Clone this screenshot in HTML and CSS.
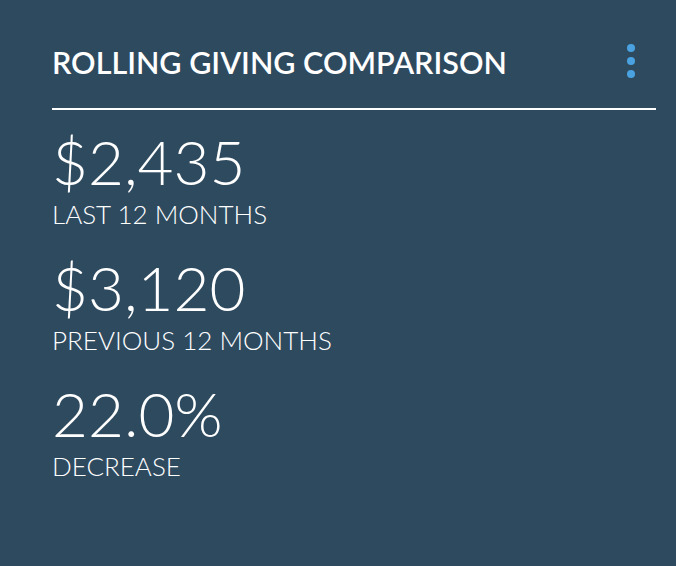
FILE: index.html
```html
<!DOCTYPE html>
<html lang="en">

<head>
    <meta charset="UTF-8">
    <meta name="viewport" content="width=device-width, initial-scale=1.0">
    <title>Rolling Giving Comparison</title>
    <link rel="stylesheet" href="styles.css">
</head>

<body>
    <div class="card">
        <div class="card-header">
            <h2 class="card-title">ROLLING GIVING COMPARISON</h2>
            <button class="menu-button" type="button" aria-label="Menu">
                <span class="dot"></span>
                <span class="dot"></span>
                <span class="dot"></span>
            </button>
        </div>
        <div class="stats">
            <div class="stat">
                <div class="stat-value">$2,435</div>
                <div class="stat-label">LAST 12 MONTHS</div>
            </div>
            <div class="stat">
                <div class="stat-value">$3,120</div>
                <div class="stat-label">PREVIOUS 12 MONTHS</div>
            </div>
            <div class="stat">
                <div class="stat-value">22.0%</div>
                <div class="stat-label">DECREASE</div>
            </div>
        </div>
    </div>
</body>

</html>
```

FILE: styles.css
```css
body {
    margin: 0;
    padding: 0;
    background-color: #2e4a5f;
    font-family: Lato, "Open Sans", sans-serif;
    color: white;
}

.card {
    width: 604px;
    padding: 38px 20px 0 52px;
}

.card-header {
    display: flex;
    align-items: flex-start;
    justify-content: space-between;
    border-bottom: 2px solid white;
    padding-bottom: 22px;
}

.card-title {
    margin: 0;
    font-size: 30.5px;
    font-weight: 600;
    line-height: 48px;
}

.menu-button {
    display: flex;
    flex-direction: column;
    gap: 5px;
    background: none;
    border: none;
    padding: 6px 0 0 0;
    margin-right: 21px;
    cursor: pointer;
}

.dot {
    width: 8px;
    height: 8px;
    border-radius: 50%;
    background-color: #4aa3e0;
}

.stats {
    display: flex;
    flex-direction: column;
    gap: 21px;
    padding-top: 16px;
}

.stat-value {
    font-size: 62px;
    font-weight: 300;
    line-height: 71px;
}

.stat-label {
    font-size: 26px;
    font-weight: 300;
    line-height: 34px;
}
```
